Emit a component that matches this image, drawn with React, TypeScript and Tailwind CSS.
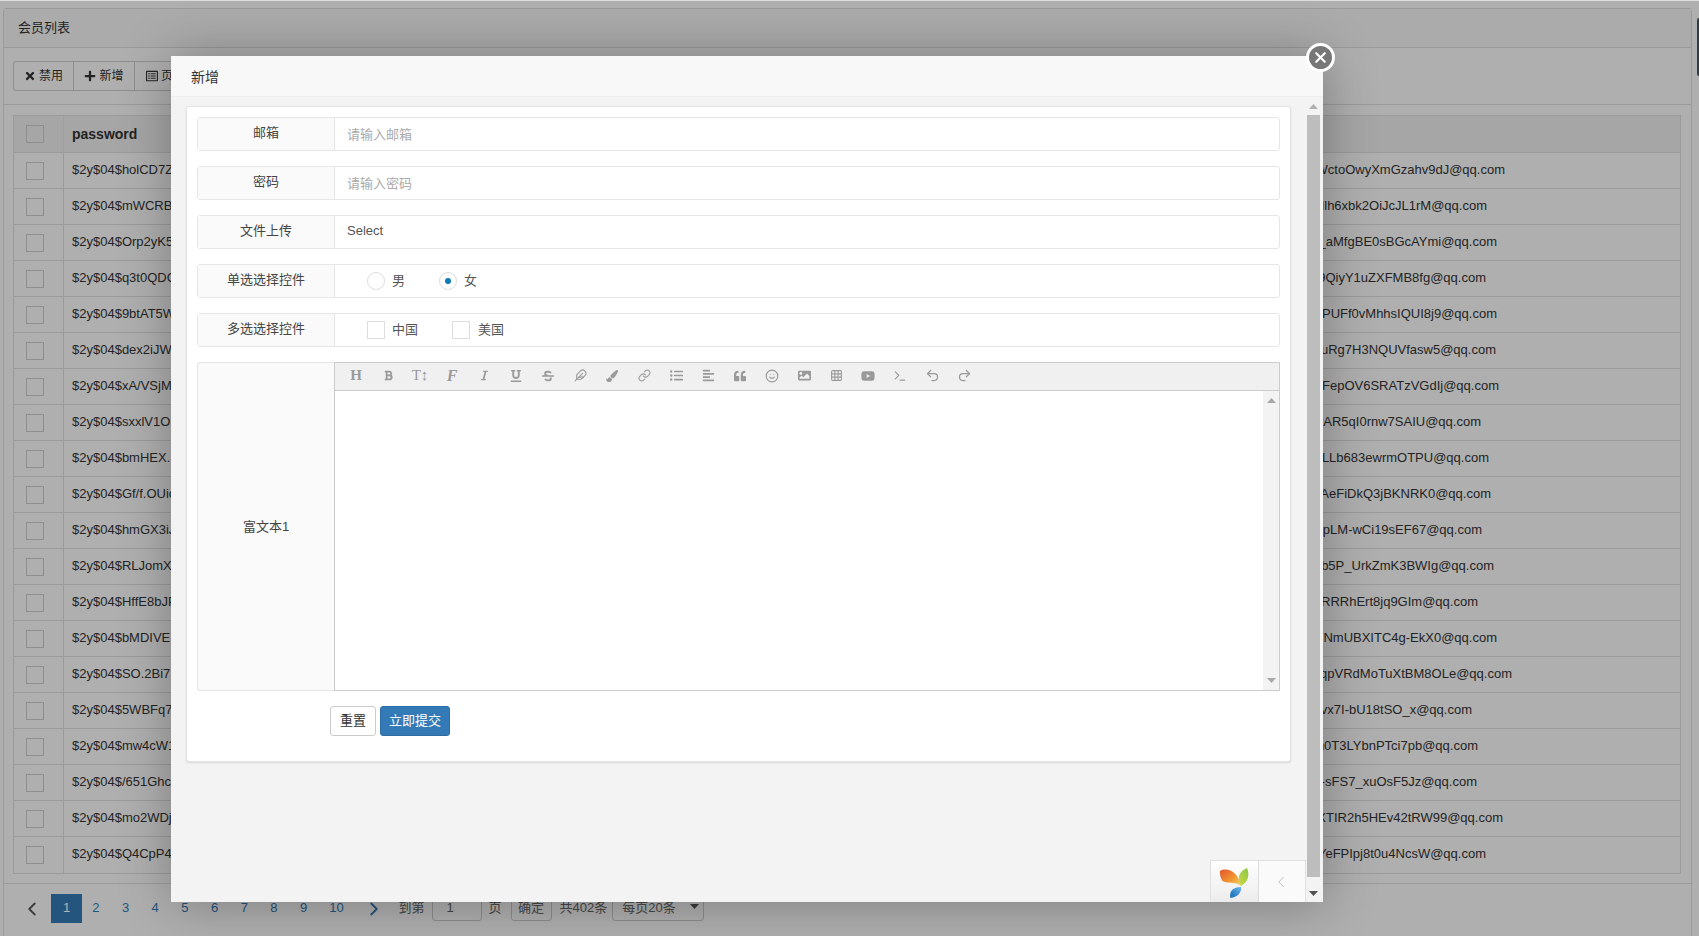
import { ChevronLeft, ChevronRight, Feather, Grid3x3, Link, Redo2, Smile, Terminal, Undo2, X } from "lucide-react";
import {
  FaAlignLeft,
  FaBold,
  FaImage,
  FaItalic,
  FaListUl,
  FaPaintBrush,
  FaPlus,
  FaQuoteLeft,
  FaRegListAlt,
  FaStrikethrough,
  FaTimes,
  FaUnderline,
  FaYoutube,
} from "react-icons/fa";

const rows = [
  { pw: "$2y$04$holCD7Z", email: "WctoOwyXmGzahv9dJ@qq.com", end: 1505 },
  { pw: "$2y$04$mWCRB", email: "Ilh6xbk2OiJcJL1rM@qq.com", end: 1487 },
  { pw: "$2y$04$Orp2yK5", email: "_aMfgBE0sBGcAYmi@qq.com", end: 1497 },
  { pw: "$2y$04$q3t0QDG", email: "9QiyY1uZXFMB8fg@qq.com", end: 1486 },
  { pw: "$2y$04$9btAT5W", email: "IPUFf0vMhhsIQUI8j9@qq.com", end: 1497 },
  { pw: "$2y$04$dex2iJW", email: "uRg7H3NQUVfasw5@qq.com", end: 1496 },
  { pw: "$2y$04$xA/VSjM", email: "FepOV6SRATzVGdIj@qq.com", end: 1499 },
  { pw: "$2y$04$sxxlV1O", email: "rAR5qI0rnw7SAIU@qq.com", end: 1481 },
  { pw: "$2y$04$bmHEX.", email: "LLb683ewrmOTPU@qq.com", end: 1489 },
  { pw: "$2y$04$Gf/f.OUic", email: "AeFiDkQ3jBKNRK0@qq.com", end: 1491 },
  { pw: "$2y$04$hmGX3iJ", email: "pLM-wCi19sEF67@qq.com", end: 1482 },
  { pw: "$2y$04$RLJomX", email: "b5P_UrkZmK3BWIg@qq.com", end: 1494 },
  { pw: "$2y$04$HffE8bJP", email: "RRRhErt8jq9GIm@qq.com", end: 1478 },
  { pw: "$2y$04$bMDIVE", email: "ENmUBXITC4g-EkX0@qq.com", end: 1497 },
  { pw: "$2y$04$SO.2Bi7", email: "qpVRdMoTuXtBM8OLe@qq.com", end: 1512 },
  { pw: "$2y$04$5WBFq7", email: "vx7I-bU18tSO_x@qq.com", end: 1472 },
  { pw: "$2y$04$mw4cW1", email: "n0T3LYbnPTci7pb@qq.com", end: 1478 },
  { pw: "$2y$04$/651Ghc", email: "-sFS7_xuOsF5Jz@qq.com", end: 1477 },
  { pw: "$2y$04$mo2WDj", email: "XTIR2h5HEv42tRW99@qq.com", end: 1503 },
  { pw: "$2y$04$Q4CpP4", email: "YeFPIpj8t0u4NcsW@qq.com", end: 1486 },
];

const toolbar = [
  <span className="text-[15px] font-bold [font-family:'Liberation_Serif',serif]">H</span>,
  <FaBold size={11} />,
  <span className="text-[15px] [font-family:'Liberation_Serif',serif]">T↕</span>,
  <span className="text-[16px] font-bold italic [font-family:'Liberation_Serif',serif]">F</span>,
  <FaItalic size={11} />,
  <FaUnderline size={12} />,
  <FaStrikethrough size={12} />,
  <Feather size={13} />,
  <FaPaintBrush size={12} />,
  <Link size={13} />,
  <FaListUl size={13} />,
  <FaAlignLeft size={13} />,
  <FaQuoteLeft size={12} />,
  <Smile size={14} />,
  <FaImage size={13} />,
  <Grid3x3 size={13} />,
  <FaYoutube size={14} />,
  <Terminal size={14} />,
  <Undo2 size={15} />,
  <Redo2 size={15} />,
];

const Triangle = ({ down, color }: { down?: boolean; color: string }) => (
  <svg width="9" height="5" viewBox="0 0 9 5" fill={color}>
    <path d={down ? "M0 0h9L4.5 5z" : "M0 5h9L4.5 0z"} />
  </svg>
);

const FormRow = ({ label, children }: { label: string; children: React.ReactNode }) => (
  <div className="flex h-[34px] rounded-[3px] border border-[#e6e6e6]">
    <div className="w-[137px] border-r border-[#e6e6e6] bg-[#fafafa] pt-[5px] text-center text-[13px] text-[#444]">{label}</div>
    <div className="flex flex-1 items-center text-[13px] text-[#555]">{children}</div>
  </div>
);

const YiiLogo = () => (
  <svg width="47" height="41" viewBox="1 0 47 41">
    <defs>
      <linearGradient id="yiiOrange" x1="0" y1="0" x2="1" y2="1">
        <stop offset="0" stopColor="#e2552b" />
        <stop offset="0.6" stopColor="#f29a33" />
        <stop offset="1" stopColor="#f6df7a" />
      </linearGradient>
      <linearGradient id="yiiGreen" x1="1" y1="0" x2="0" y2="1">
        <stop offset="0" stopColor="#8cc63f" />
        <stop offset="1" stopColor="#c8d94a" />
      </linearGradient>
      <linearGradient id="yiiBlue" x1="1" y1="0" x2="0" y2="1">
        <stop offset="0" stopColor="#6fb5e6" />
        <stop offset="1" stopColor="#0e6ab8" />
      </linearGradient>
    </defs>
    <path d="M10 10C17 6 28 10 31 25C25 20 16 23 12.500 20C10 17 10 13 10 10Z" fill="url(#yiiOrange)" />
    <path d="M37 7C40 14 38 21 31 25C28.500 20 26 12 37 7Z" fill="url(#yiiGreen)" />
    <path d="M31 26C32 32 27 36 20.500 37C19 31 22 26 31 26Z" fill="url(#yiiBlue)" />
  </svg>
);

const App = () => {
  return (
    <div className="relative h-[936px] w-full overflow-hidden border-t border-[#ddd] bg-[#fbfbfb] [font-family:'Liberation_Sans','Noto_Sans_CJK_SC',sans-serif]">
      {/* list page behind the dialog */}
      <div className="ml-[3px] mr-[7px] mt-[7px] h-[960px] rounded-[3px] border border-[#ddd]">
        <div className="flex h-[39px] items-center border-b border-[#ddd] bg-[#f5f5f5] pl-[14px] text-[13px] text-[#333]">会员列表</div>
        <div className="h-[57px] border-b border-[#ddd] pl-[9px] pt-[13px]">
          <div className="flex h-[30px] w-fit rounded-[3px] border border-[#ccc] text-[12px] text-[#333]">
            <span className="flex w-[60px] items-center justify-center gap-[3px] border-r border-[#ccc]"><FaTimes size={12} />禁用</span>
            <span className="flex w-[61px] items-center justify-center gap-[3px] border-r border-[#ccc]"><FaPlus size={12} />新增</span>
            <span className="flex w-[61px] items-center justify-center gap-[3px]"><FaRegListAlt size={12} />页面</span>
          </div>
        </div>
        <div className="ml-[9px] mr-[10px] mt-[10px] border border-[#ddd] text-[13px] text-[#333]">
          <div className="flex h-[37px] items-center border-b border-[#ddd] bg-[#eee]">
            <div className="flex h-full w-[50px] items-center border-r border-[#e4e4e4] pl-[12px]">
              <div className="h-[18px] w-[18px] border border-[#ccc]" />
            </div>
            <div className="pl-[8px] text-[14px] font-bold">password</div>
          </div>
          {rows.map((r) => (
            <div key={r.pw} className="flex h-9 items-center border-b border-[#ddd] last:border-b-0">
              <div className="flex h-full w-[50px] shrink-0 items-center border-r border-[#ddd] pl-[12px]">
                <div className="h-[18px] w-[18px] border border-[#ccc]" />
              </div>
              <div className="pb-[2px] pl-[8px]">{r.pw}</div>
              <div className="flex-1 whitespace-nowrap pb-[2px] text-right" style={{ paddingRight: 1680 - r.end }}>{r.email}</div>
            </div>
          ))}
        </div>
        <div className="mt-[9px] flex h-[40px] items-start border-t border-[#ddd] pl-[1px] pt-[10px] text-[13px] text-[#666]">
          <span className="flex h-[29px] w-[46px] items-center justify-center pl-[8px] text-[#555]"><ChevronLeft size={22} /></span>
          <span className="flex h-[29px] w-[31px] items-center justify-center bg-[#337ab7] pb-[2px] text-[#fff]">1</span>
          {["2", "3", "4", "5", "6", "7", "8", "9"].map((n) => (
            <span key={n} className="flex h-[29px] w-[29.7px] items-center justify-center pb-[2px] pr-[2px] text-[#337ab7]">{n}</span>
          ))}
          <span className="flex h-[29px] w-[34px] items-center justify-center pb-[2px] text-[#337ab7]">10</span>
          <span className="flex h-[29px] w-[40px] items-center justify-center text-[#337ab7]"><ChevronRight size={22} /></span>
          <span className="ml-[5px] flex h-[29px] items-center pb-[2px]">到第</span>
          <span className="ml-[7px] flex h-[27px] w-[50px] items-center rounded-[3px] border border-[#ccc] pl-[14px]">1</span>
          <span className="ml-[7px] flex h-[29px] items-center pb-[2px]">页</span>
          <span className="ml-[9px] flex h-[27px] w-[41px] items-center justify-center rounded-[3px] border border-[#ccc]">确定</span>
          <span className="ml-[8px] flex h-[29px] items-center pb-[2px]">共402条</span>
          <span className="ml-[5px] flex h-[27px] w-[92px] items-center justify-between rounded-[3px] border border-[#ccc] pl-[9px] pr-[4px]">
            每页20条
            <span className="pb-[2px]"><Triangle down color="#555" /></span>
          </span>
        </div>
      </div>

      {/* page scrollbar */}
      <div className="absolute right-0 top-[17px] h-[58px] w-[2px] rounded-l-[2px] bg-[#4a5568]" />

      <div className="absolute inset-0 bg-black/30" />

      {/* dialog */}
      <div className="absolute left-[171px] top-[55px] flex h-[846px] w-[1152px] flex-col bg-[#f3f3f3] shadow-[1px_1px_50px_rgba(0,0,0,0.3)]">
        <div className="flex h-[41px] shrink-0 items-center border-b border-[#eee] bg-[#f8f8f8] pl-[20px] pt-[2px] text-[14px] text-[#333]">新增</div>
        <div className="relative flex min-h-0 flex-1">
          <div className="min-w-0 flex-1 px-[15px] pt-[9px]">
            <div className="h-[656px] rounded-[3px] border border-[#e4e4e4] bg-white px-[10px] pt-[10px] shadow-[0_1px_2px_rgba(0,0,0,0.12)]">
              <div className="flex flex-col gap-[15px]">
                <FormRow label="邮箱"><span className="pl-[12px] pt-[1px] text-[#aaa]">请输入邮箱</span></FormRow>
                <FormRow label="密码"><span className="pl-[12px] pt-[1px] text-[#aaa]">请输入密码</span></FormRow>
                <FormRow label="文件上传"><span className="pb-[2px] pl-[12px]">Select</span></FormRow>
                <FormRow label="单选选择控件">
                  <span className="ml-[32px] h-[18px] w-[18px] rounded-full border border-[#ddd]" />
                  <span className="ml-[7px]">男</span>
                  <span className="ml-[34px] flex h-[18px] w-[18px] items-center justify-center rounded-full border border-[#ddd]">
                    <span className="h-[6px] w-[6px] rounded-full bg-[#0a7ab8]" />
                  </span>
                  <span className="ml-[7px]">女</span>
                </FormRow>
                <FormRow label="多选选择控件">
                  <span className="ml-[32px] h-[18px] w-[18px] border border-[#ddd]" />
                  <span className="ml-[7px]">中国</span>
                  <span className="ml-[34px] h-[18px] w-[18px] border border-[#ddd]" />
                  <span className="ml-[8px]">美国</span>
                </FormRow>
                <div className="flex h-[329px]">
                  <div className="flex w-[137px] items-center justify-center rounded-l-[3px] border-y border-l border-[#e6e6e6] bg-[#fafafa] text-[13px] text-[#444]">富文本1</div>
                  <div className="flex min-w-0 flex-1 flex-col border border-[#ccc]">
                    <div className="flex h-[28px] items-center border-b border-[#ccc] bg-[#f0f0f0] pb-[2px] pl-[5px] text-[#9a9a9a]">
                      {toolbar.map((icon, i) => (
                        <span key={i} className="flex w-[32px] justify-center">{icon}</span>
                      ))}
                    </div>
                    <div className="flex flex-1 justify-end">
                      <div className="flex w-[16px] flex-col items-center justify-between bg-[#f3f3f3] py-[7px]">
                        <Triangle color="#a8a8a8" />
                        <Triangle down color="#a8a8a8" />
                      </div>
                    </div>
                  </div>
                </div>
              </div>
              <div className="ml-[133px] mt-[15px] flex gap-[4px] text-[13px]">
                <button className="h-[30px] w-[46px] rounded-[3px] border border-[#ccc] bg-white text-[#333]">重置</button>
                <button className="h-[30px] w-[70px] rounded-[3px] border border-[#2e6da4] bg-[#337ab7] text-white">立即提交</button>
              </div>
            </div>
          </div>

          <div className="flex w-[17px] shrink-0 flex-col items-center pr-[2px]">
            <div className="flex h-[18px] items-center"><Triangle color="#b0b0b0" /></div>
            <div className="w-[13px] flex-1 bg-[#bdbdbd]" />
            <div className="flex h-[25px] items-center pt-[7px]"><Triangle down color="#505050" /></div>
          </div>

          {/* floating debug tab */}
          <div className="absolute bottom-0 right-[17px] flex h-[42px] border-x border-t border-[#e0e0e0]">
            <div className="h-full w-[47px] bg-gradient-to-b from-white to-[#ececec]"><YiiLogo /></div>
            <div className="flex w-[47px] items-center justify-center border-l border-[#ddd] bg-[#fafafa] pr-[2px] text-[#aaa]"><ChevronLeft size={18} strokeWidth={1} /></div>
          </div>
        </div>

        <div className="absolute -right-[12px] -top-[13px] flex h-[29px] w-[29px] items-center justify-center rounded-full border-[3px] border-white bg-[#777]">
          <X size={17} color="#fff" strokeWidth={3} />
        </div>
      </div>
    </div>
  );
};

export default App;
